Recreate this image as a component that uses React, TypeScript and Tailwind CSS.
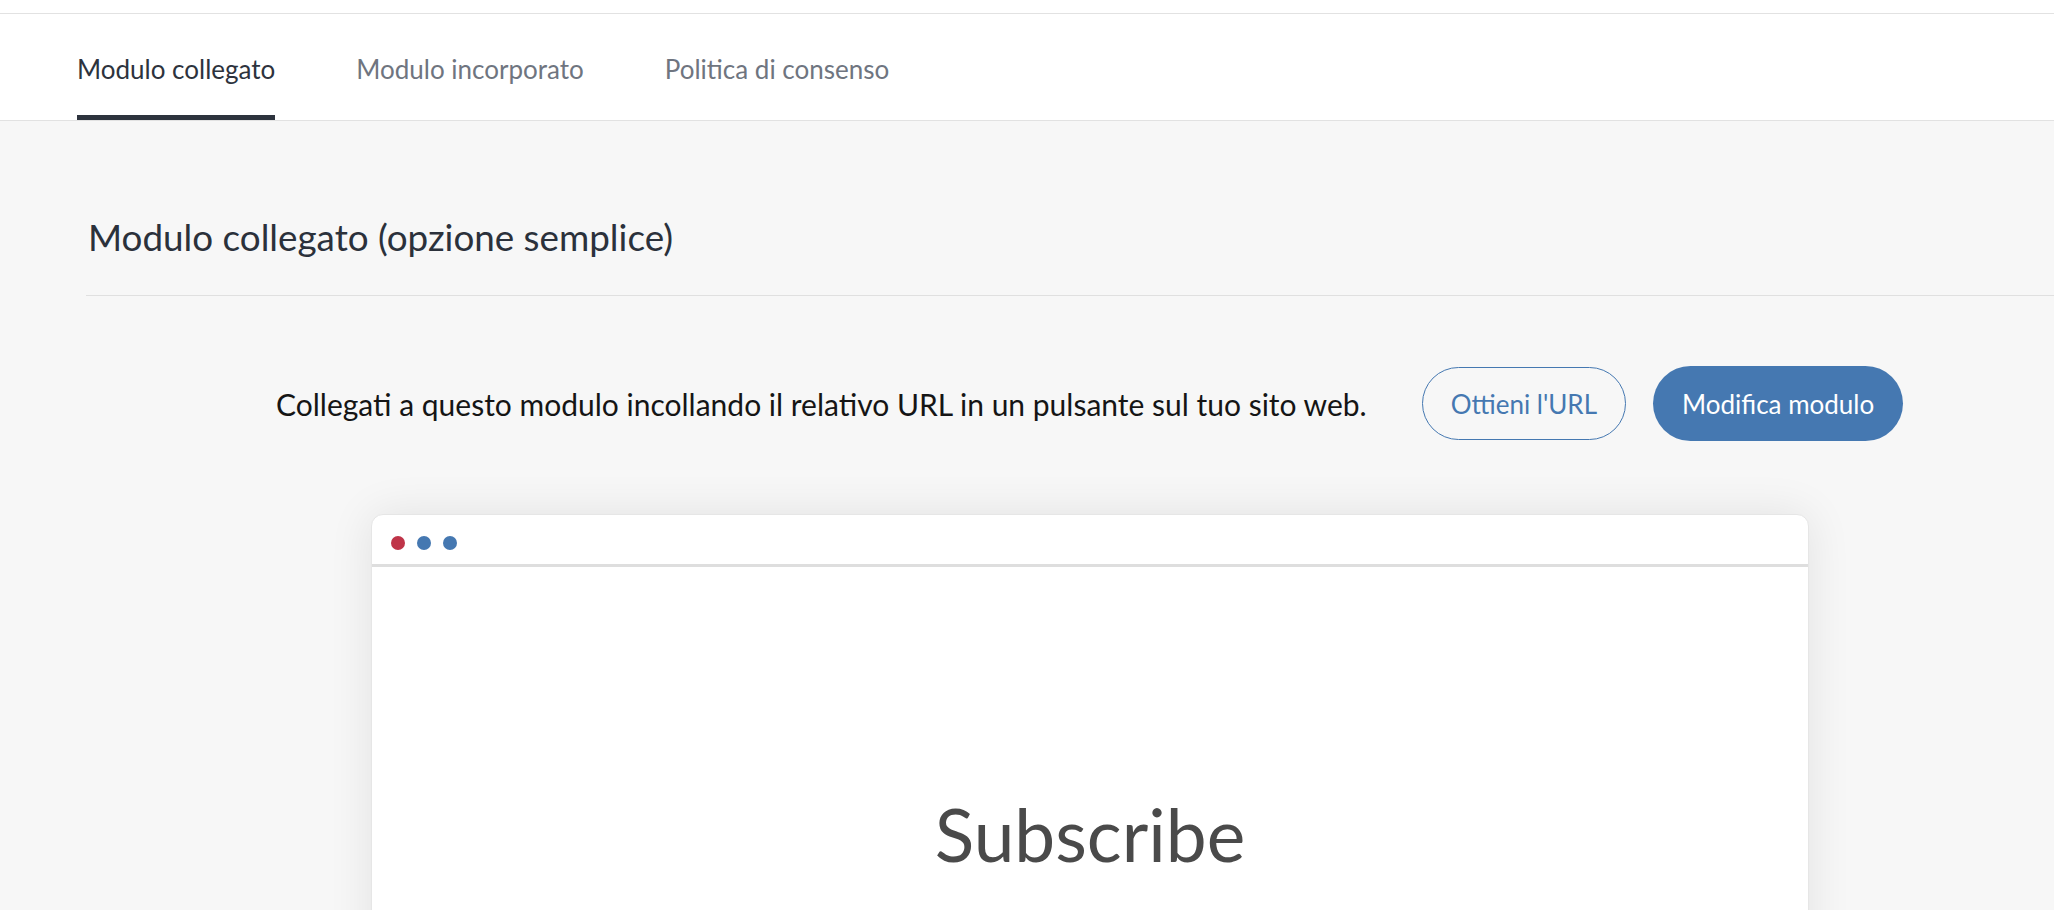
import React from "react";

export default function App() {
  const tabs = [
    { label: "Modulo collegato", active: true },
    { label: "Modulo incorporato", active: false },
    { label: "Politica di consenso", active: false },
  ];
  return (
    <div className="min-h-screen w-full overflow-hidden bg-[#f7f7f7] font-['Lato',sans-serif]">
      <div className="h-[14px] bg-white border-b border-[#e2e2e2]" />
      <div className="h-[107px] bg-white border-b border-[#e2e2e2] flex pl-[77px] gap-[81px]">
        {tabs.map((t) => (
          <div
            key={t.label}
            className={
              t.active
                ? "h-[106px] pt-[39px] border-b-[5px] border-[#2d333d] text-[#2d333d] text-[26px] leading-[32px]"
                : "h-[106px] pt-[39px] border-b-[5px] border-transparent text-[#6f7580] text-[26px] leading-[32px]"
            }
          >
            {t.label}
          </div>
        ))}
      </div>

      <div className="pl-[86px]">
        <div className="pt-[94px] pb-[36px] border-b border-[#e0e0e0]">
          <h1 className="text-[36.8px] leading-[44px] text-[#2b313b] font-normal pl-[2px]">
            Modulo collegato (opzione semplice)
          </h1>
        </div>
      </div>

      <div className="mt-[70px] flex items-center pl-[276px]">
        <p className="text-[30px] leading-[36px] text-[#151515]">
          Collegati a questo modulo incollando il relativo URL in un pulsante sul tuo sito web.
        </p>
        <button className="ml-[55px] h-[73px] px-[28px] rounded-full border border-[#4578b1] text-[#4578b1] text-[26px] leading-[32px] bg-transparent">
          Ottieni l'URL
        </button>
        <button className="ml-[27px] h-[75px] px-[29px] rounded-full bg-[#4578b1] text-white text-[26px] leading-[32px]">
          Modifica modulo
        </button>
      </div>

      <div className="mt-[73px] ml-[371px] w-[1438px] bg-white rounded-t-[12px] border border-[#e6e6e6] shadow-[0_0_45px_rgba(0,0,0,0.09)]">
        <div className="h-[52px] pt-[21px] pl-[19px] flex gap-[12px] border-b-[3px] border-[#dedede]">
          <span className="w-[14px] h-[14px] rounded-full bg-[#bf3448]" />
          <span className="w-[14px] h-[14px] rounded-full bg-[#4578b1]" />
          <span className="w-[14px] h-[14px] rounded-full bg-[#4578b1]" />
        </div>
        <div className="pt-[231px] h-[400px] text-center">
          <div className="text-[73px] leading-[73px] text-[#4a4a4a]">Subscribe</div>
        </div>
      </div>
    </div>
  );
}
